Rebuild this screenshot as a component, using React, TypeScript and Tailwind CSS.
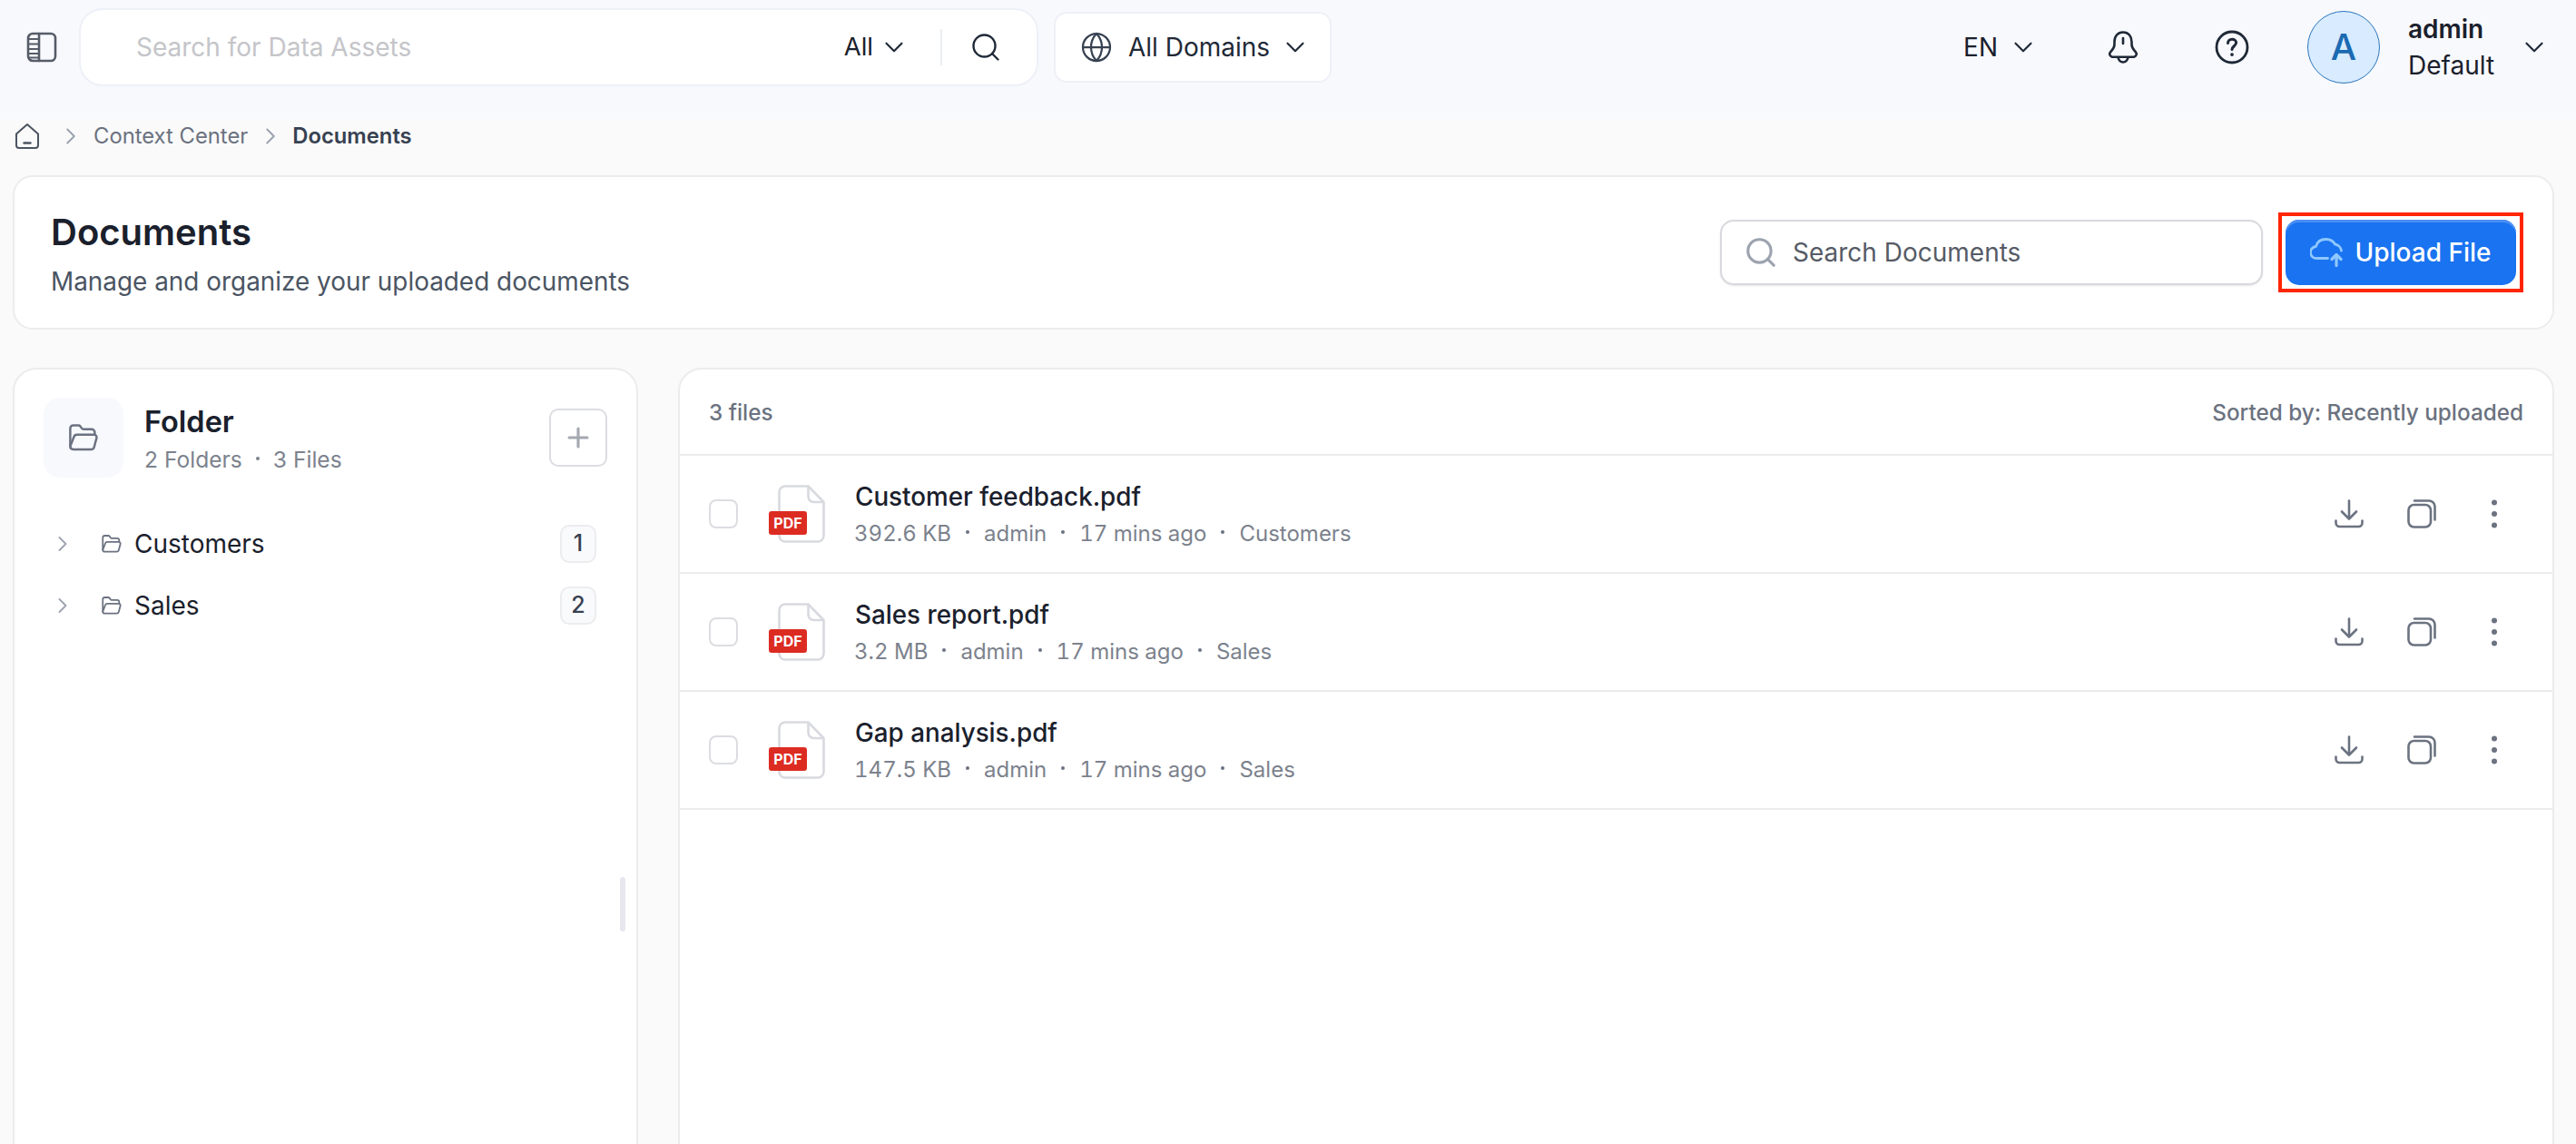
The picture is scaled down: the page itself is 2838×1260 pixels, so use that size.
import React from "react";
import { ChevronDown, ChevronRight, Search, Globe, Plus } from "lucide-react";

function SidebarIcon() {
  return (
    <svg width="34" height="34" viewBox="0 0 34 34" fill="none" stroke="#565c68" strokeWidth="2.600" strokeLinecap="round" strokeLinejoin="round">
      <rect x="2" y="2" width="30" height="30" rx="5" />
      <path d="M14 2v30" />
      <path d="M3 8h11M3 13.500h11M3 19h11M3 24h11M3 28.500h11" strokeWidth="1.800" />
    </svg>
  );
}
function HomeIcon() {
  return (
    <svg width="28" height="30" viewBox="0 0 28 30" fill="none" stroke="#4b5563" strokeWidth="2" strokeLinecap="round" strokeLinejoin="round">
      <path d="M2 12.500 14 2l12 10.500V25a3 3 0 0 1-3 3H5a3 3 0 0 1-3-3z" />
      <path d="M10.500 22.500h7" strokeWidth="2.400" />
    </svg>
  );
}
function BellIcon() {
  return (
    <svg width="32" height="36" viewBox="0 0 32 36" fill="none" stroke="#1f2937" strokeWidth="2.600" strokeLinecap="round" strokeLinejoin="round">
      <path d="M16 1.500C10 1.500 6.500 6 6.500 12v3c0 4-2.500 6-4.500 8.500-1.500 2-.5 4.500 2 5.300h24c2.500-.8 3.500-3.300 2-5.300-2-2.500-4.500-4.500-4.500-8.500v-3c0-6-3.500-10.500-9.500-10.500z" />
      <path d="M16 8v6" />
      <path d="M10.500 29.500c1 3.500 3 5 5.500 5s4.500-1.500 5.500-5" />
    </svg>
  );
}
function HelpIcon() {
  return (
    <svg width="38" height="38" viewBox="0 0 38 38" fill="none" stroke="#1f2937" strokeWidth="2.800" strokeLinecap="round" strokeLinejoin="round">
      <circle cx="19" cy="19" r="17" />
      <path d="M14.500 14.500c0-2.600 2-4.300 4.600-4.300 2.500 0 4.500 1.600 4.500 3.900 0 3.500-4.600 3.800-4.600 7.400" strokeWidth="3" />
      <path d="M19 27v.2" strokeWidth="3.600" />
    </svg>
  );
}
function CloudIcon() {
  return (
    <svg width="37" height="32" viewBox="0 0 37 32" fill="none" stroke="#8fc8ff" strokeWidth="2.800" strokeLinecap="round" strokeLinejoin="round">
      <path d="M19.500 22.500H7.500a6.500 6.500 0 0 1-1-13C8 3.500 13 1.500 17.500 1.500c4.500 0 8 2 10 5.500 3.500.5 6.500 3.500 7 7" />
      <path d="M29 30.500V19M24 23.500l5-5 5 5" strokeWidth="3.200" />
    </svg>
  );
}
function FolderOpenIcon({ size, color = "#6b7280", sw = 2 }: { size: number; color?: string; sw?: number }) {
  return (
    <svg width={size} height={size} viewBox="0 0 32 32" fill="none" stroke={color} strokeWidth={sw} strokeLinecap="round" strokeLinejoin="round">
      <path d="M3 24.500V7a3 3 0 0 1 3-3h5.200a2 2 0 0 1 1.600.8l1.600 2.200a2 2 0 0 0 1.600.8H24a3 3 0 0 1 3 3v2" />
      <path d="M3 24.500c0 1.900 1.200 3 3 3h17.500a3 3 0 0 0 2.900-2.200l2.400-9a2.400 2.400 0 0 0-2.300-3.100H9.500a3 3 0 0 0-2.900 2.200z" />
    </svg>
  );
}
function DownloadIcon() {
  return (
    <svg width="32" height="32" viewBox="0 0 32 32" fill="none" stroke="#6b7280" strokeWidth="2.600" strokeLinecap="round" strokeLinejoin="round">
      <path d="M16 1.500v19" />
      <path d="M8 13.500l8 8 8-8" />
      <path d="M1.500 23.500v2.500a4 4 0 0 0 4 4h21a4 4 0 0 0 4-4v-2.500" />
    </svg>
  );
}
function CopyIcon() {
  return (
    <svg width="32" height="32" viewBox="0 0 32 32" fill="none" stroke="#6b7280" strokeWidth="2.600" strokeLinecap="round" strokeLinejoin="round">
      <rect x="1.500" y="6" width="24.500" height="24.500" rx="6" />
      <path d="M8 1.500h16a6.500 6.500 0 0 1 6.500 6.500v14.500" />
    </svg>
  );
}
function DotsIcon() {
  return (
    <svg width="12" height="32" viewBox="0 0 12 32" fill="#6b7280">
      <circle cx="6" cy="3.500" r="3" />
      <circle cx="6" cy="16" r="3" />
      <circle cx="6" cy="28.500" r="3" />
    </svg>
  );
}
function PdfIcon() {
  return (
    <div className="relative w-[62px] h-[64px] shrink-0">
      <svg className="absolute right-0 top-0" width="52" height="64" viewBox="0 0 52 64" fill="none" stroke="#d9dae0" strokeWidth="2.600" strokeLinejoin="round">
        <path d="M8 1.500h25.500L50.500 19v37a6.500 6.500 0 0 1-6.500 6.500H8A6.500 6.500 0 0 1 1.500 56V8A6.500 6.500 0 0 1 8 1.500z" />
        <path d="M33.500 1.500V13a6 6 0 0 0 6 6h11" />
      </svg>
      <div className="absolute left-0 top-[29px] w-[42px] h-[26px] rounded-[3px] bg-[#dc2c22] text-white text-[16px] font-bold flex items-center justify-center leading-none">
        PDF
      </div>
    </div>
  );
}

const folders = [
  { name: "Customers", count: "1" },
  { name: "Sales", count: "2" },
];
const files = [
  { name: "Customer feedback.pdf", size: "392.6 KB", folder: "Customers" },
  { name: "Sales report.pdf", size: "3.2 MB", folder: "Sales" },
  { name: "Gap analysis.pdf", size: "147.5 KB", folder: "Sales" },
];

function Dot() {
  return <span className="w-[4px] h-[4px] rounded-full bg-[#6b7280] mx-[16px] mb-[4px] shrink-0" />;
}

export default function App() {
  return (
    <div className="h-[1260px] w-[2838px] overflow-hidden flex flex-col bg-[#fafafa] text-[#1a202c] font-['Inter',sans-serif]">
      <header className="h-[131px] shrink-0 bg-[#f8f9fd] flex items-start pt-[9px]">
        <div className="w-[87px] shrink-0 h-[86px] flex items-center pl-[29px]">
          <SidebarIcon />
        </div>
        <div className="w-[1057px] h-[86px] rounded-[26px] border-2 border-[#eef0f8] bg-white flex items-center pl-[61px] shrink-0">
          <span className="text-[28px] text-[#c4c5c9] flex-1">Search for Data Assets</span>
          <span className="text-[27.500px]">All</span>
          <ChevronDown size={34} strokeWidth={1.500} className="ml-[6px] text-[#1f2937]" />
          <span className="w-[2px] h-[40px] bg-[#eceef2] ml-[34px]" />
          <Search size={36} strokeWidth={1.600} className="ml-[30px] mr-[38px] text-[#1f2937]" />
        </div>
        <div className="ml-[17px] mt-[4px] w-[306px] h-[78px] rounded-[14px] border-2 border-[#eef0f8] bg-white flex items-center pl-[27px] shrink-0">
          <Globe size={36} strokeWidth={1.500} className="text-[#374151]" />
          <span className="text-[28px] ml-[17px] text-[#1f2937]">All Domains</span>
          <ChevronDown size={34} strokeWidth={1.500} className="ml-[11px] text-[#1f2937]" />
        </div>
        <div className="flex-1" />
        <div className="flex items-center h-[86px] shrink-0">
          <span className="text-[28px]">EN</span>
          <ChevronDown size={34} strokeWidth={1.500} className="ml-[11px] text-[#1f2937]" />
          <span className="ml-[77px] flex"><BellIcon /></span>
          <span className="ml-[85px] flex"><HelpIcon /></span>
          <div className="ml-[64px] w-[80px] h-[80px] rounded-full bg-[#d8ebff] border border-[#2a76bd] flex items-center justify-center text-[#1b6ab2] text-[40px] font-medium leading-none">
            A
          </div>
          <div className="ml-[31px] flex flex-col w-[121px]">
            <span className="text-[28px] font-semibold leading-[39px]">admin</span>
            <span className="text-[28px] leading-[39px] mt-[1px]">Default</span>
          </div>
          <ChevronDown size={34} strokeWidth={1.500} className="ml-[1px] mr-[29px] text-[#1f2937]" />
        </div>
      </header>

      <nav className="h-[62px] shrink-0 flex items-center pl-[16px] text-[23.800px] pb-[24px]">
        <HomeIcon />
        <ChevronRight size={30} strokeWidth={1.600} className="ml-[19px] text-[#9ca3af]" />
        <span className="ml-[10px] text-[#6b7280]">Context Center</span>
        <ChevronRight size={30} strokeWidth={1.600} className="ml-[10px] text-[#9ca3af]" />
        <span className="ml-[9px] font-semibold text-[#374151]">Documents</span>
      </nav>

      <main className="flex-1 min-h-0 flex flex-col pl-[14px] pr-[24px]">
        <section className="h-[170px] shrink-0 rounded-[22px] border-2 border-[#ececec] bg-white flex items-center pl-[40px] pr-[32px]">
          <div className="flex-1 flex flex-col pt-[2px]">
            <h1 className="text-[40px] font-semibold leading-[50px]">Documents</h1>
            <p className="text-[27.900px] leading-[36px] mt-[11px] text-[#4b5563]">Manage and organize your uploaded documents</p>
          </div>
          <div className="w-[598px] h-[72px] rounded-[15px] border-2 border-[#d8d9de] bg-white shadow-[0_1px_2px_rgba(0,0,0,0.1)] flex items-center pl-[24px]">
            <Search size={38} strokeWidth={2} className="text-[#9ca3af]" />
            <span className="ml-[16px] text-[28px] text-[#565b66]">Search Documents</span>
          </div>
          <div className="ml-[17px] border-[4px] border-[#ff2600] p-[4px] flex">
            <button className="w-[254px] h-[72px] rounded-[15px] bg-[#1a73f0] shadow-[inset_0_3px_0_#4a8ff5] flex items-center justify-center text-white text-[28px] font-medium">
              <CloudIcon />
              <span className="ml-[12px]">Upload File</span>
            </button>
          </div>
        </section>

        <div className="flex-1 min-h-0 flex mt-[42px] gap-[44px]">
          <aside className="relative w-[689px] shrink-0 h-[900px] rounded-t-[26px] border-2 border-[#ececec] bg-white pl-[32px] pr-[32px]">
            <div className="flex items-center mt-[31px] h-[88px]">
              <div className="w-[88px] h-[88px] rounded-[18px] bg-[#f8f9fd] flex items-center justify-center">
                <FolderOpenIcon size={36} color="#6b7280" sw={2.200} />
              </div>
              <div className="ml-[23px] flex-1 flex flex-col">
                <span className="text-[32.500px] font-semibold leading-[44px] mt-[2px]">Folder</span>
                <span className="text-[24.600px] leading-[36px] mt-[1px] text-[#7c828d] flex items-center">
                  2 Folders<span className="w-[4px] h-[4px] rounded-full bg-[#7c828d] mx-[15px] mb-[2px]" />3 Files
                </span>
              </div>
              <button className="w-[64px] h-[64px] rounded-[10px] border-2 border-[#dcdde1] bg-white flex items-center justify-center text-[#a4a8b0]">
                <Plus size={34} strokeWidth={2.200} />
              </button>
            </div>
            <ul className="mt-[52px] flex flex-col gap-[26px]">
              {folders.map((f) => (
                <li key={f.name} className="h-[42px] flex items-center pl-[7px] pr-[12px]">
                  <ChevronRight size={28} strokeWidth={1.600} className="text-[#9ca3af]" />
                  <span className="ml-[28px] flex"><FolderOpenIcon size={24} color="#6b7280" sw={2.400} /></span>
                  <span className="ml-[13px] flex-1 text-[28px]">{f.name}</span>
                  <span className="w-[40px] h-[42px] rounded-[10px] border-2 border-[#ececef] bg-[#f9fafb] flex items-center justify-center text-[25px] font-medium text-[#374151]">
                    {f.count}
                  </span>
                </li>
              ))}
            </ul>
            <span className="absolute right-[12px] top-[559px] w-[6px] h-[60px] rounded-full bg-[#e7e7ed]" />
          </aside>

          <section className="flex-1 h-[900px] rounded-t-[26px] border-2 border-[#ececec] bg-white">
            <div className="h-[95px] border-b-2 border-[#ececec] flex items-center justify-between pt-[2px] pl-[32px] pr-[32px] text-[24.300px] font-medium text-[#6b7280]">
              <span>3 files</span>
              <span>Sorted by: Recently uploaded</span>
            </div>
            {files.map((f) => (
              <div key={f.name} className="h-[130px] border-b-2 border-[#ececec] flex items-center pl-[32px] pr-[58px]">
                <span className="w-[32px] h-[32px] rounded-[8px] border-2 border-[#dcdde1] bg-white shrink-0" />
                <span className="ml-[34px] flex"><PdfIcon /></span>
                <div className="ml-[32px] flex-1 flex flex-col">
                  <span className="text-[27.800px] font-medium leading-[40px] pl-[1px]">{f.name}</span>
                  <span className="text-[24px] leading-[34px] mt-[4px] text-[#7c828d] flex items-center tabular-nums">
                    {f.size}<Dot />admin<Dot />17 mins ago<Dot />{f.folder}
                  </span>
                </div>
                <DownloadIcon />
                <span className="ml-[48px] flex"><CopyIcon /></span>
                <span className="ml-[58px] flex"><DotsIcon /></span>
              </div>
            ))}
          </section>
        </div>
      </main>
    </div>
  );
}
